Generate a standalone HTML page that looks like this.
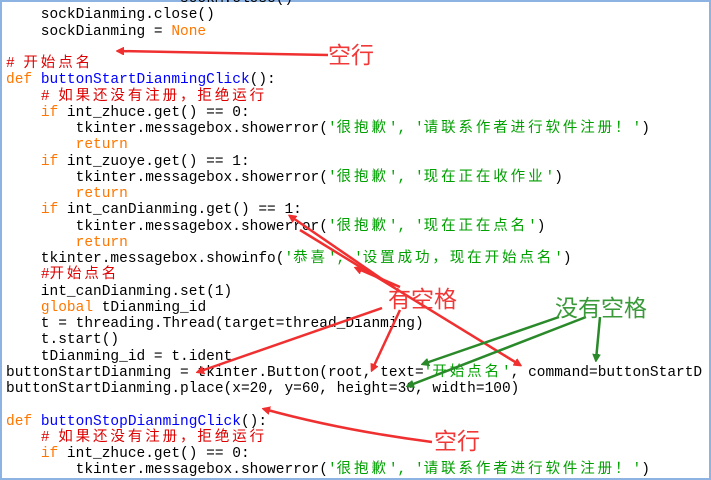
<!DOCTYPE html>
<html><head><meta charset="utf-8"><style>
html,body{margin:0;padding:0;background:#fff;}
body{width:711px;height:480px;position:relative;overflow:hidden;}
.frame{position:absolute;left:0;top:0;width:707px;height:476px;border:2px solid #8db3e2;}
pre{position:absolute;left:6px;top:-9px;margin:0;font-family:"Liberation Mono","Noto Sans CJK SC",monospace;font-size:14.5px;line-height:16.25px;color:#000;}
.k{color:#ff7700}.f{color:#0000ff}.c{color:#dd0000}.s{color:#00a000}
.z{letter-spacing:2.9px}
.ann{position:absolute;font-family:"Noto Sans CJK SC",sans-serif;font-size:23px;line-height:1;}
</style></head><body>
<div class="frame"></div>
<pre>                    sockM.close()
    sockDianming.close()
    sockDianming = <span class="k">None</span>

<span class="c"># <span class="z">开始点名</span></span>
<span class="k">def</span> <span class="f">buttonStartDianmingClick</span>():
    <span class="c"># <span class="z">如果还没有注册，拒绝运行</span></span>
    <span class="k">if</span> int_zhuce.get() == 0:
        tkinter.messagebox.showerror(<span class="s">'<span class="z">很抱歉</span>', '<span class="z">请联系作者进行软件注册！</span>'</span>)
        <span class="k">return</span>
    <span class="k">if</span> int_zuoye.get() == 1:
        tkinter.messagebox.showerror(<span class="s">'<span class="z">很抱歉</span>', '<span class="z">现在正在收作业</span>'</span>)
        <span class="k">return</span>
    <span class="k">if</span> int_canDianming.get() == 1:
        tkinter.messagebox.showerror(<span class="s">'<span class="z">很抱歉</span>', '<span class="z">现在正在点名</span>'</span>)
        <span class="k">return</span>
    tkinter.messagebox.showinfo(<span class="s">'<span class="z">恭喜</span>', '<span class="z">设置成功，现在开始点名</span>'</span>)
    <span class="c">#<span class="z">开始点名</span></span>
    int_canDianming.set(1)
    <span class="k">global</span> tDianming_id
    t = threading.Thread(target=thread_Dianming)
    t.start()
    tDianming_id = t.ident
buttonStartDianming = tkinter.Button(root, text=<span class="s">'<span class="z">开始点名</span>'</span>, command=buttonStartD
buttonStartDianming.place(x=20, y=60, height=30, width=100)

<span class="k">def</span> <span class="f">buttonStopDianmingClick</span>():
    <span class="c"># <span class="z">如果还没有注册，拒绝运行</span></span>
    <span class="k">if</span> int_zhuce.get() == 0:
        tkinter.messagebox.showerror(<span class="s">'<span class="z">很抱歉</span>', '<span class="z">请联系作者进行软件注册！</span>'</span>)
</pre>
<svg width="711" height="480" style="position:absolute;left:0;top:0">
<defs>
<marker id="r" markerWidth="8" markerHeight="8" refX="6" refY="4" orient="auto" markerUnits="userSpaceOnUse"><path d="M0,0 L8,4 L0,8 z" fill="#f03030" transform="scale(1.6) translate(-2.5,-1.5)"/></marker>
<marker id="g" markerWidth="8" markerHeight="8" refX="6" refY="4" orient="auto" markerUnits="userSpaceOnUse"><path d="M0,0 L8,4 L0,8 z" fill="#2a8a2a" transform="scale(1.6) translate(-2.5,-1.5)"/></marker>
</defs>
<g stroke="#f03030" stroke-width="2.5" fill="none">
<line x1="328" y1="55" x2="118" y2="51" marker-end="url(#r)"/>
<line x1="395" y1="288" x2="290" y2="216" marker-end="url(#r)"/>
<line x1="300" y1="230" x2="520" y2="365" marker-end="url(#r)"/>
<line x1="400" y1="287" x2="356" y2="268" marker-end="url(#r)"/>
<line x1="382" y1="308" x2="198" y2="372" marker-end="url(#r)"/>
<line x1="400" y1="310" x2="372" y2="370" marker-end="url(#r)"/>
<path d="M432,442 Q340,430 264,409" marker-end="url(#r)"/>
</g>
<g stroke="#2a8a2a" stroke-width="2.5" fill="none">
<line x1="559" y1="317" x2="423" y2="364" marker-end="url(#g)"/>
<line x1="586" y1="317" x2="408" y2="386" marker-end="url(#g)"/>
<line x1="600" y1="317" x2="596" y2="360" marker-end="url(#g)"/>
</g>
</svg>
<div class="ann" style="left:328px;top:42px;color:#f03838">空行</div>
<div class="ann" style="left:388px;top:286px;color:#f03838">有空格</div>
<div class="ann" style="left:555px;top:295px;color:#3a9a3a">没有空格</div>
<div class="ann" style="left:434px;top:428px;color:#f03838">空行</div>
</body></html>
